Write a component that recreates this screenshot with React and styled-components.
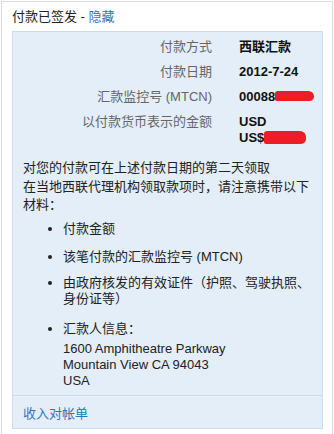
import React from "react";
import styled, { createGlobalStyle } from "styled-components";

const Global = createGlobalStyle`
  html, body { margin: 0; padding: 0; background: #fff; }
  body {
    font-family: "Liberation Sans", Arial, "Noto Sans CJK SC", sans-serif;
    font-size: 13px;
    color: #222;
  }
`;

const Frame = styled.div`
  margin: 1px 1px 0 1px;
  height: 433px;
  box-sizing: border-box;
  border: 1px solid #dcdcdc;
  border-bottom: none;
  padding: 7px 9px 0 10px;
`;

const Title = styled.div`
  font-size: 13px;
  line-height: 16px;
  color: #222;
  height: 22px;
`;

const Link = styled.a`
  color: #2f76b9;
  text-decoration: none;
  cursor: pointer;
`;

const Panel = styled.div`
  background: #e3eef8;
  border: 1px solid #cbdbe8;
`;

const Details = styled.div`
  display: grid;
  grid-template-columns: 199px 1fr;
  column-gap: 27px;
  row-gap: 7px;
  padding: 6px 0 6px 0;
`;

const Label = styled.div`
  text-align: right;
  color: #666;
  line-height: 18px;
`;

const Value = styled.div`
  font-weight: bold;
  color: #111;
  line-height: 16px;
  padding-top: 1px;
`;

const Redact = styled.span`
  display: inline-block;
  vertical-align: middle;
  width: ${(p) => p.w}px;
  height: ${(p) => p.h}px;
  background: #ee1c25;
  border-radius: 3px 6px 5px 2px;
  margin-top: -3px;
`;

const Body = styled.div`
  padding: 7px 10px 6px 10px;
`;

const Para = styled.p`
  margin: 0;
  line-height: 18.5px;
  color: #222;
`;

const List = styled.ul`
  margin: 6px 0 0 0;
  padding: 0 0 0 40px;
  list-style: disc;
`;

const Item = styled.li`
  line-height: 16px;
  margin-bottom: ${(p) => p.$mb ?? 12}px;
  color: #222;
`;

const Address = styled.div`
  margin-top: 4px;
  line-height: 16px;
`;

const Footer = styled.div`
  border-top: 1px solid #cfdde9;
  padding: 10px 10px 6px 10px;
  line-height: 16px;
`;

export default function App() {
  return (
    <>
      <Global />
      <Frame>
        <Title>
          付款已签发 - <Link>隐藏</Link>
        </Title>
        <Panel>
          <Details>
            <Label>付款方式</Label>
            <Value>西联汇款</Value>
            <Label>付款日期</Label>
            <Value>2012-7-24</Value>
            <Label>汇款监控号 (MTCN)</Label>
            <Value>
              00088<Redact w={39} h={10} />
            </Value>
            <Label>以付款货币表示的金额</Label>
            <Value>
              USD
              <br />
              US$<Redact w={42} h={13} />
            </Value>
          </Details>
          <Body>
            <Para>对您的付款可在上述付款日期的第二天领取</Para>
            <Para>在当地西联代理机构领取款项时，请注意携带以下材料：</Para>
            <List>
              <Item>付款金额</Item>
              <Item $mb={10}>该笔付款的汇款监控号 (MTCN)</Item>
              <Item $mb={14}>由政府核发的有效证件（护照、驾驶执照、身份证等）</Item>
              <Item $mb={0}>
                汇款人信息：
                <Address>
                  1600 Amphitheatre Parkway
                  <br />
                  Mountain View CA 94043
                  <br />
                  USA
                </Address>
              </Item>
            </List>
          </Body>
          <Footer>
            <Link>收入对帐单</Link>
          </Footer>
        </Panel>
      </Frame>
    </>
  );
}
